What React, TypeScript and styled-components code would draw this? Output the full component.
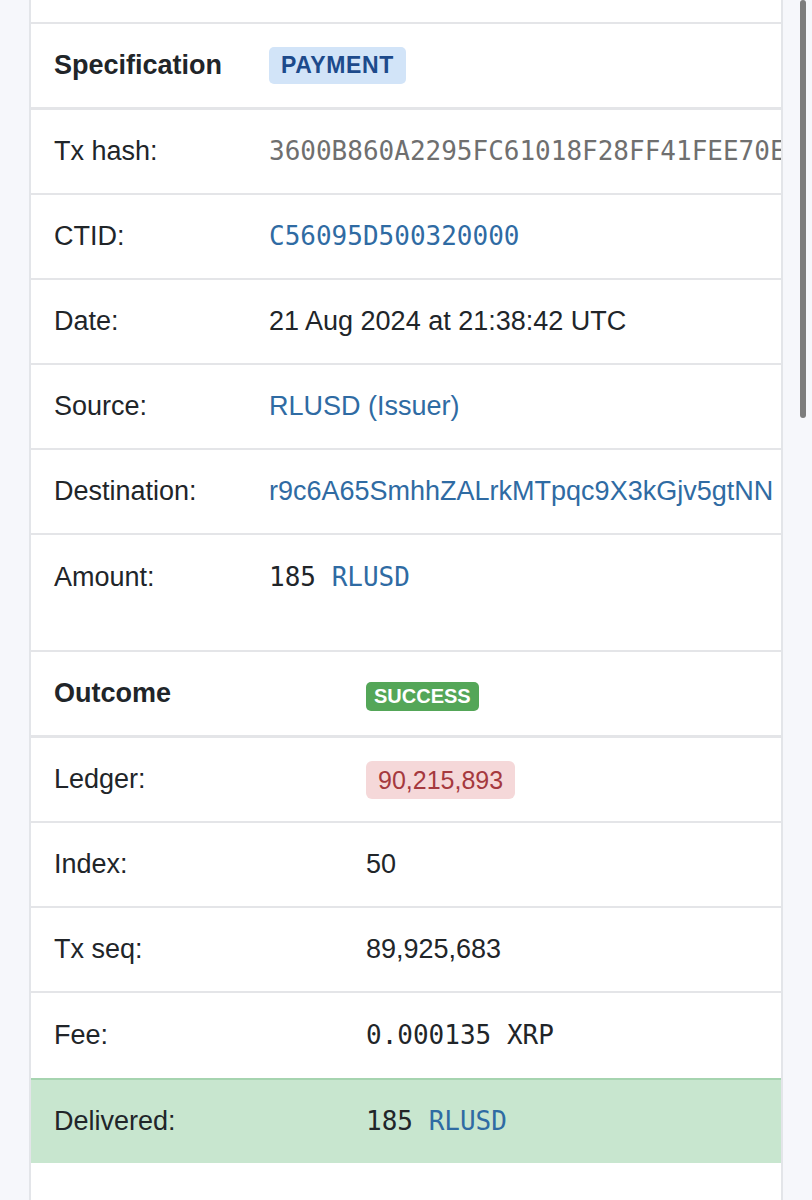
import React from 'react';
import styled, { createGlobalStyle } from 'styled-components';

const GlobalStyle = createGlobalStyle`
  html, body {
    margin: 0;
    padding: 0;
    background: #f6f7fb;
    font-family: "Liberation Sans", Arial, Helvetica, sans-serif;
    color: #212529;
  }
`;

const Page = styled.div`
  width: 812px;
  min-height: 1200px;
  overflow: hidden;
`;

const Card = styled.div`
  margin-left: 29px;
  width: 754px;
  box-sizing: border-box;
  background: #fff;
  border-left: 2px solid #e3e5e9;
  border-right: 2px solid #e3e5e9;
  min-height: 1200px;
  overflow: hidden;
`;

const Stub = styled.div`
  height: 24px;
  box-sizing: border-box;
  border-bottom: 2px solid #e4e5e8;
`;

const Section = styled.div<{ $gapBelow?: number }>`
  padding-bottom: ${(p) => p.$gapBelow ?? 0}px;
`;

const Row = styled.div<{ $labelWidth: number; $variant?: 'head' | 'plain' | 'last' | 'delivered' }>`
  display: grid;
  grid-template-columns: ${(p) => p.$labelWidth}px 1fr;
  align-items: center;
  height: ${(p) => (p.$variant === 'head' ? 86 : 85)}px;
  box-sizing: border-box;
  padding-left: 23px;
  font-size: 27px;
  white-space: nowrap;
  overflow: hidden;
  border-bottom: ${(p) =>
    p.$variant === 'head'
      ? '3px solid #e4e5e8'
      : p.$variant === 'last' || p.$variant === 'delivered'
      ? 'none'
      : '2px solid #e4e5e8'};
  ${(p) =>
    p.$variant === 'delivered' &&
    `
    background: #c8e6cf;
    border-top: 2px solid #a6d4b0;
  `}
`;

const TopRow = styled(Row)`
  border-top: 2px solid #e4e5e8;
  height: 88px;
`;

const Label = styled.div<{ $bold?: boolean }>`
  font-weight: ${(p) => (p.$bold ? 700 : 400)};
  color: #212529;
`;

const Value = styled.div`
  overflow: hidden;
  white-space: nowrap;
  color: #212529;
`;

const Mono = styled.span<{ $tone?: 'grey' | 'link' | 'dark' }>`
  font-family: "DejaVu Sans Mono", "Liberation Mono", monospace;
  font-size: 26px;
  color: ${(p) => (p.$tone === 'grey' ? '#6f6f6f' : p.$tone === 'link' ? '#2f6ba3' : '#212529')};
`;

const Link = styled.span`
  color: #2f6ba3;
`;

const Badge = styled.span<{ $kind: 'type' | 'success' | 'ledger' }>`
  display: inline-block;
  ${(p) =>
    p.$kind === 'type'
      ? `
    background: #d2e4f8;
    color: #1d4a8b;
    font-weight: 700;
    font-size: 23px;
    letter-spacing: 0.6px;
    line-height: 37px;
    padding: 0 12px;
    border-radius: 5px;
  `
      : p.$kind === 'success'
      ? `
    background: #54a658;
    color: #fff;
    font-weight: 700;
    font-size: 20px;
    line-height: 29px;
    padding: 0 8px;
    border-radius: 5px;
    margin-top: 6px;
  `
      : `
    background: #f5d8d9;
    color: #a5393e;
    font-size: 25px;
    line-height: 38px;
    padding: 0 12px;
    border-radius: 6px;
  `}
`;

const Scrollbar = styled.div`
  position: fixed;
  top: 0;
  left: 800px;
  width: 6px;
  height: 418px;
  border-radius: 3px;
  background: #7d7d7d;
`;

const specWidth = 215;
const outWidth = 312;

const App = () => {
  return (
    <Page>
      <GlobalStyle />
      <Card>
        <Stub />
        <Section $gapBelow={30}>
          <Row $labelWidth={specWidth} $variant="head">
            <Label $bold>Specification</Label>
            <Value>
              <Badge $kind="type">PAYMENT</Badge>
            </Value>
          </Row>
          <Row $labelWidth={specWidth}>
            <Label>Tx hash:</Label>
            <Value>
              <Mono $tone="grey">3600B860A2295FC61018F28FF41FEE70E</Mono>
            </Value>
          </Row>
          <Row $labelWidth={specWidth}>
            <Label>CTID:</Label>
            <Value>
              <Mono $tone="link">C56095D500320000</Mono>
            </Value>
          </Row>
          <Row $labelWidth={specWidth}>
            <Label>Date:</Label>
            <Value>21 Aug 2024 at 21:38:42 UTC</Value>
          </Row>
          <Row $labelWidth={specWidth}>
            <Label>Source:</Label>
            <Value>
              <Link>RLUSD (Issuer)</Link>
            </Value>
          </Row>
          <Row $labelWidth={specWidth}>
            <Label>Destination:</Label>
            <Value>
              <Link>r9c6A65SmhhZALrkMTpqc9X3kGjv5gtNN</Link>
            </Value>
          </Row>
          <Row $labelWidth={specWidth} $variant="last">
            <Label>Amount:</Label>
            <Value>
              <Mono $tone="dark">185 </Mono>
              <Mono $tone="link">RLUSD</Mono>
            </Value>
          </Row>
        </Section>
        <Section>
          <TopRow $labelWidth={outWidth} $variant="head">
            <Label $bold>Outcome</Label>
            <Value>
              <Badge $kind="success">SUCCESS</Badge>
            </Value>
          </TopRow>
          <Row $labelWidth={outWidth}>
            <Label>Ledger:</Label>
            <Value>
              <Badge $kind="ledger">90,215,893</Badge>
            </Value>
          </Row>
          <Row $labelWidth={outWidth}>
            <Label>Index:</Label>
            <Value>50</Value>
          </Row>
          <Row $labelWidth={outWidth}>
            <Label>Tx seq:</Label>
            <Value>89,925,683</Value>
          </Row>
          <Row $labelWidth={outWidth} $variant="last">
            <Label>Fee:</Label>
            <Value>
              <Mono $tone="dark">0.000135 XRP</Mono>
            </Value>
          </Row>
          <Row $labelWidth={outWidth} $variant="delivered">
            <Label>Delivered:</Label>
            <Value>
              <Mono $tone="dark">185 </Mono>
              <Mono $tone="link">RLUSD</Mono>
            </Value>
          </Row>
        </Section>
      </Card>
      <Scrollbar />
    </Page>
  );
};

export default App;
